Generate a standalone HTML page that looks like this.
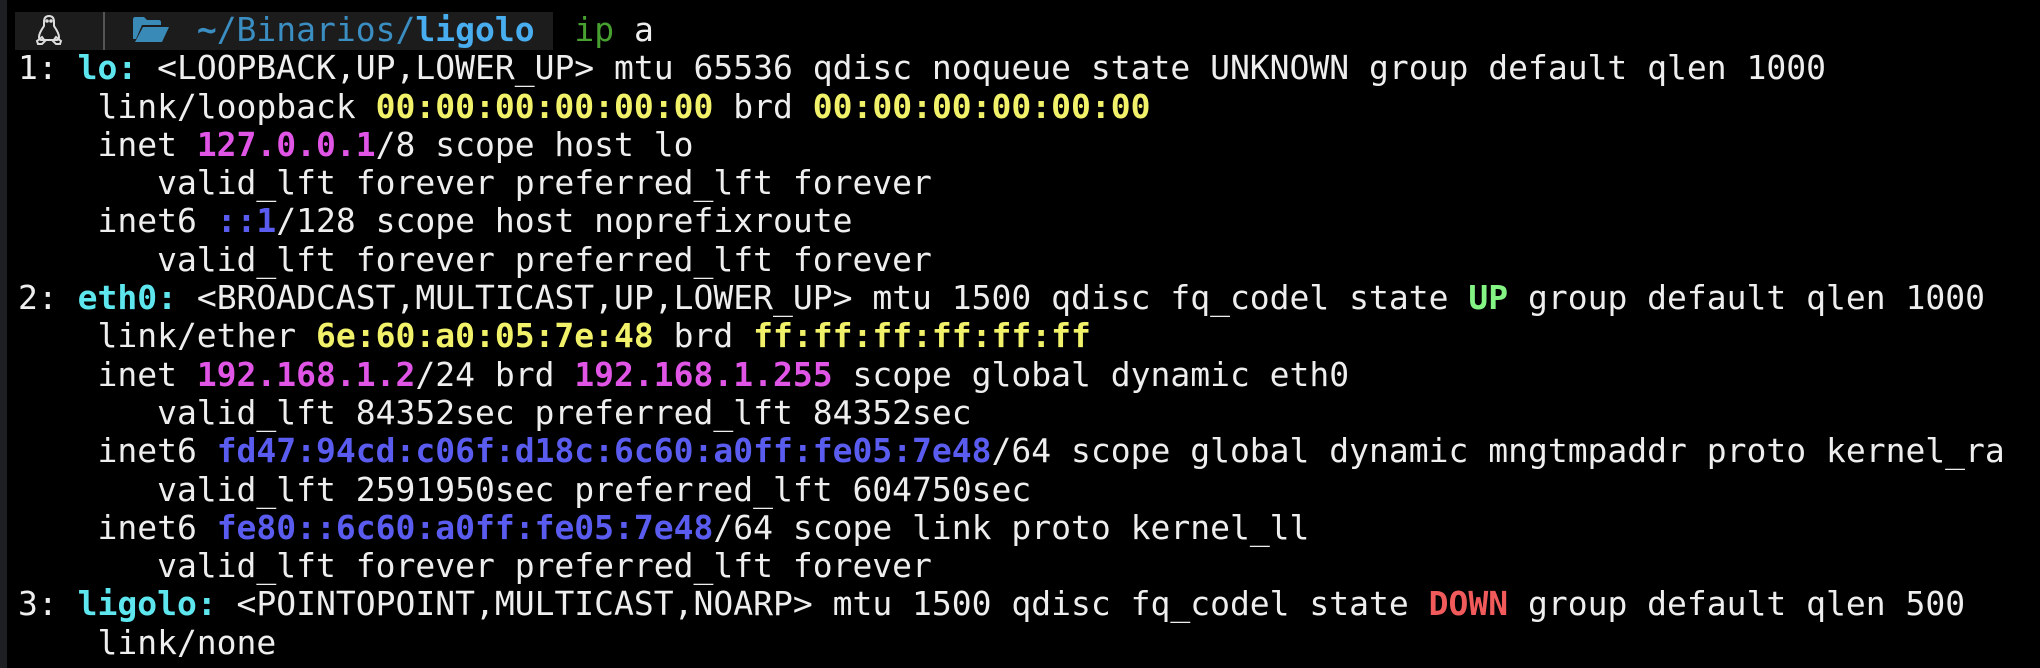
<!DOCTYPE html>
<html><head><meta charset="utf-8"><style>
html,body{margin:0;padding:0;background:#000;width:2040px;height:668px;overflow:hidden;position:relative}
.strip{position:absolute;left:0;top:0;width:7px;height:668px;background:#1e1f23}
.bar{position:absolute;left:15px;top:12px;width:538px;height:38px;background:#1c1c1c}
.sep{position:absolute;left:103px;top:12px;width:2px;height:38px;background:#555}
pre{position:absolute;left:18px;top:11px;margin:0;font-family:"DejaVu Sans Mono","Liberation Mono",monospace;font-size:33px;line-height:38.3px;color:#eeeeee;white-space:pre}
b{font-weight:bold}
.c{color:#5ee6ee;font-weight:bold}.y{color:#f2f26a;font-weight:bold}.m{color:#e055e6;font-weight:bold}
.bl{color:#5a5cf0;font-weight:bold}.g{color:#84f584;font-weight:bold}.r{color:#f05a5a;font-weight:bold}
.p{color:#3b8ec2}.pb{color:#48aef0;font-weight:bold}.ip{color:#48a030}
svg{position:absolute}
</style></head><body>
<div class="strip"></div>
<div class="bar"></div>
<div class="sep"></div>
<svg style="left:35px;top:15px" width="28" height="30" viewBox="0 0 28 30" fill="none" stroke="#ddd" stroke-width="2">
<path d="M14 1c-4 0-5 3-5 6v4c-2 3-5 7-5 11 0 2 1 3 2 3h16c1 0 2-1 2-3 0-4-3-8-5-11V7c0-3-1-6-5-6z"/>
<path d="M2 26l5-4 3 4-3 3H3zM26 26l-5-4-3 4 3 3h4z"/>
<circle cx="12" cy="6" r="0.8" fill="#ddd"/><circle cx="16" cy="6" r="0.8" fill="#ddd"/>
</svg>
<svg style="left:133px;top:17px" width="36" height="25" viewBox="0 0 36 25">
<path d="M0 2c0-1 1-2 2-2h9l3 3h12c1 0 2 1 2 2v3H9L3 22H0z" fill="#3a8ab8"/>
<path d="M10 10h26l-7 15H2z" fill="#3a8ab8"/>
</svg>
<pre>         <span class="p"><b>~</b>/Binarios/</span><span class="pb">ligolo</span>  <span class="ip">ip</span> a
1: <span class="c">lo:</span> &lt;LOOPBACK,UP,LOWER_UP&gt; mtu 65536 qdisc noqueue state UNKNOWN group default qlen 1000
    link/loopback <span class="y">00:00:00:00:00:00</span> brd <span class="y">00:00:00:00:00:00</span>
    inet <span class="m">127.0.0.1</span>/8 scope host lo
       valid_lft forever preferred_lft forever
    inet6 <span class="bl">::1</span>/128 scope host noprefixroute
       valid_lft forever preferred_lft forever
2: <span class="c">eth0:</span> &lt;BROADCAST,MULTICAST,UP,LOWER_UP&gt; mtu 1500 qdisc fq_codel state <span class="g">UP</span> group default qlen 1000
    link/ether <span class="y">6e:60:a0:05:7e:48</span> brd <span class="y">ff:ff:ff:ff:ff:ff</span>
    inet <span class="m">192.168.1.2</span>/24 brd <span class="m">192.168.1.255</span> scope global dynamic eth0
       valid_lft 84352sec preferred_lft 84352sec
    inet6 <span class="bl">fd47:94cd:c06f:d18c:6c60:a0ff:fe05:7e48</span>/64 scope global dynamic mngtmpaddr proto kernel_ra
       valid_lft 2591950sec preferred_lft 604750sec
    inet6 <span class="bl">fe80::6c60:a0ff:fe05:7e48</span>/64 scope link proto kernel_ll
       valid_lft forever preferred_lft forever
3: <span class="c">ligolo:</span> &lt;POINTOPOINT,MULTICAST,NOARP&gt; mtu 1500 qdisc fq_codel state <span class="r">DOWN</span> group default qlen 500
    link/none</pre>
</body></html>
